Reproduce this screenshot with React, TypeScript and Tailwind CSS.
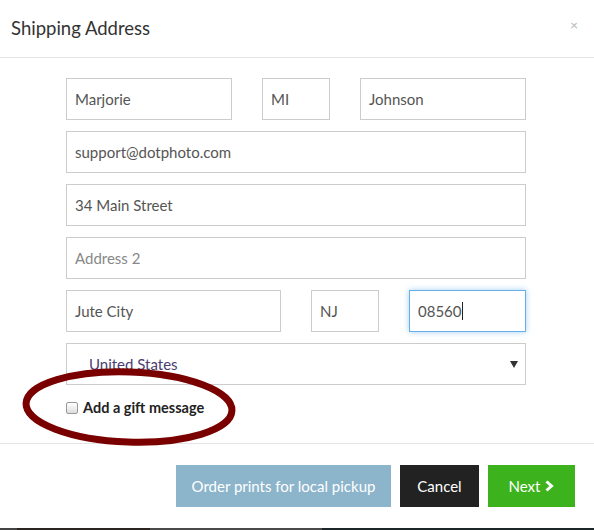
import React from 'react';

const font = { fontFamily: 'Lato, "Open Sans", sans-serif' };

const Field = ({ value, className = '', placeholder = false }: { value: string; className?: string; placeholder?: boolean }) => (
  <div
    className={`h-[42px] flex items-center px-[8px] border border-[#ccc] bg-white text-[15px] ${placeholder ? 'text-[#888]' : 'text-[#555]'} ${className}`}
  >
    {value}
  </div>
);

export default function App() {
  return (
    <div className="w-[594px] h-[530px] bg-white flex flex-col relative overflow-hidden" style={font}>
      {/* header */}
      <div className="h-[58px] border-b border-[#e5e5e5] flex items-center justify-between pl-[11px] pr-[16px]">
        <h4 className="text-[18.5px] text-[#333] leading-none pb-[1px]">Shipping Address</h4>
        <span className="text-[14px] font-bold text-black/25 leading-none -mt-[8px]">×</span>
      </div>

      {/* body */}
      <div className="pt-[20px] pl-[66px] w-[526px] flex flex-col gap-[11px] relative">
        <div className="flex gap-[30px]">
          <Field value="Marjorie" className="w-[166px]" />
          <Field value="MI" className="w-[68px]" />
          <Field value="Johnson" className="w-[166px]" />
        </div>
        <Field value="support@dotphoto.com" />
        <Field value="34 Main Street" />
        <Field value="Address 2" placeholder />
        <div className="flex gap-[30px]">
          <Field value="Jute City" className="w-[215px]" />
          <Field value="NJ" className="w-[68px]" />
          <div className="w-[117px] h-[42px] flex items-center px-[8px] border border-[#66afe9] shadow-[0_0_6px_rgba(102,175,233,0.6)] text-[15px] text-[#555]">
            08560<span className="w-px h-[18px] bg-[#222]" />
          </div>
        </div>
        <div className="h-[42px] flex items-center justify-between pl-[22px] pr-[7px] border border-[#ccc] text-[15px] text-[#4a3d70]">
          <span>United States</span>
          <svg width="8" height="7" viewBox="0 0 8 7">
            <path d="M0 0h8L4 7z" fill="#333" />
          </svg>
        </div>
      </div>

      {/* gift */}
      <div className="h-[59px] border-b border-[#e5e5e5] pl-[66px] flex items-center gap-[5px] pb-[13px]">
        <div className="w-[12px] h-[12px] rounded-[2px] border border-[#999] bg-gradient-to-b from-white to-[#ddd]" />
        <span className="text-[14.5px] font-bold text-[#222]">Add a gift message</span>
      </div>

      {/* footer */}
      <div className="flex justify-end gap-[9px] pt-[21px] pr-[19px]">
        <button className="w-[215px] h-[42px] bg-[#8cb4cb] text-white text-[15px]">Order prints for local pickup</button>
        <button className="w-[79px] h-[42px] bg-[#222] text-white text-[15px]">Cancel</button>
        <button className="w-[87px] h-[42px] bg-[#3cb31c] text-white text-[15px] flex items-center justify-center gap-[5px]">
          Next
          <svg width="9" height="12" viewBox="0 0 9 12">
            <path d="M1.5 1.5L6.5 6L1.5 10.5" fill="none" stroke="white" strokeWidth="3" />
          </svg>
        </button>
      </div>

      {/* backdrop strip */}
      <div className="absolute left-0 right-0 bottom-0 h-[2px] flex">
        <div className="w-[17px] bg-[#444]" />
        <div className="w-[133px] bg-[#2a2520]" />
        <div className="w-[172px] bg-[#4a4a4a]" />
        <div className="flex-1 bg-[#1c2528]" />
      </div>

      {/* annotation ellipse */}
      <svg className="absolute left-0 top-0 pointer-events-none" width="594" height="530">
        <ellipse cx="129" cy="407" rx="103" ry="35" fill="none" stroke="#7a0000" strokeWidth="7" transform="rotate(2 129 407)" />
      </svg>
    </div>
  );
}
